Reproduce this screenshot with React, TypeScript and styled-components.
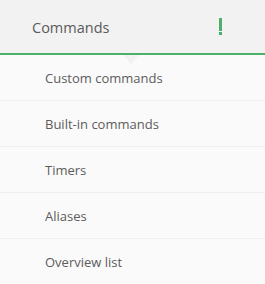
import React from "react";
import styled, { createGlobalStyle } from "styled-components";

const Global = createGlobalStyle`
  html, body { margin: 0; padding: 0; background: #fafafa; }
  body { font-family: "Open Sans", "Liberation Sans", sans-serif; }
`;

const Panel = styled.div`
  width: 265px;
  height: 284px;
  overflow: hidden;
  background: #fafafa;
`;

const Header = styled.div`
  position: relative;
  height: 53px;
  box-sizing: content-box;
  border-bottom: 2px solid #4db06a;
  background: #f2f2f2;
  display: flex;
  align-items: center;
  justify-content: space-between;
  padding: 0 43px 0 32px;
  &::after {
    content: "";
    position: absolute;
    left: 123px;
    bottom: -11px;
    width: 0;
    height: 0;
    border-left: 8px solid transparent;
    border-right: 8px solid transparent;
    border-top: 9px solid #f2f2f2;
  }
`;

const Title = styled.span`
  font-size: 14.5px;
  color: #5a5a5a;
  margin-top: 1px;
`;

const Alert = styled.svg`
  display: block;
  margin-top: 1px;
`;

const List = styled.ul`
  list-style: none;
  margin: 0;
  padding: 0;
`;

const Item = styled.li`
  height: 45px;
  display: flex;
  align-items: center;
  padding-left: 45px;
  font-size: 13px;
  color: #5c5c5c;
  border-bottom: 1px solid #eeeeee;
`;

const items = ["Custom commands", "Built-in commands", "Timers", "Aliases", "Overview list"];

export default function App() {
  return (
    <Panel>
      <Global />
      <Header>
        <Title>Commands</Title>
        <Alert width="3" height="18" viewBox="0 0 3 18">
          <rect x="0" y="0" width="3" height="13" fill="#4db06a" />
          <rect x="0" y="14" width="3" height="3" fill="#4db06a" />
        </Alert>
      </Header>
      <List>
        {items.map((t) => (
          <Item key={t}>{t}</Item>
        ))}
      </List>
    </Panel>
  );
}
